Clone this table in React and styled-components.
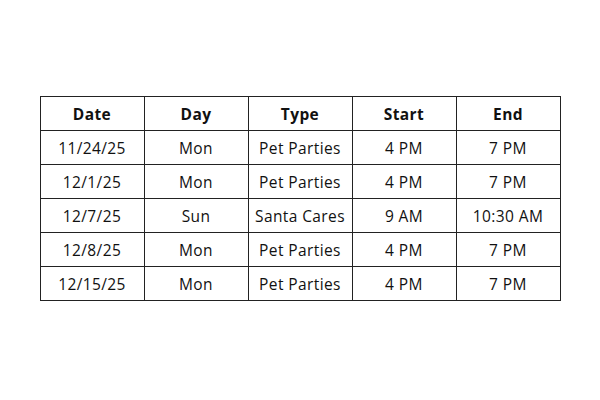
import { createGlobalStyle, styled } from "styled-components";

const GlobalStyle = createGlobalStyle`
  body {
    margin: 0;
    background: #fff;
    font-family: "Open Sans", "Lato", sans-serif;
  }
`;

const Page = styled.div`
  width: 600px;
  height: 400px;
  display: flex;
  align-items: center;
  justify-content: center;
  padding-bottom: 3px;
  box-sizing: border-box;
`;

const Table = styled.table`
  border-collapse: collapse;
  color: #111;
  font-size: 15.5px;
`;

const Cell = styled.td`
  width: 103px;
  height: 33px;
  padding: 0;
  border: 1px solid #222;
  text-align: center;
  vertical-align: middle;
  letter-spacing: 0.4px;
  font-weight: ${(p) => (p.$head ? 700 : 400)};
`;

const rows = [
  ["11/24/25", "Mon", "Pet Parties", "4 PM", "7 PM"],
  ["12/1/25", "Mon", "Pet Parties", "4 PM", "7 PM"],
  ["12/7/25", "Sun", "Santa Cares", "9 AM", "10:30 AM"],
  ["12/8/25", "Mon", "Pet Parties", "4 PM", "7 PM"],
  ["12/15/25", "Mon", "Pet Parties", "4 PM", "7 PM"],
];

export default function App() {
  return (
    <Page>
      <GlobalStyle />
      <Table>
        <thead>
          <tr>
            {["Date", "Day", "Type", "Start", "End"].map((h) => (
              <Cell as="th" key={h} $head>
                {h}
              </Cell>
            ))}
          </tr>
        </thead>
        <tbody>
          {rows.map((r, i) => (
            <tr key={i}>
              {r.map((c, j) => (
                <Cell key={j}>{c}</Cell>
              ))}
            </tr>
          ))}
        </tbody>
      </Table>
    </Page>
  );
}
